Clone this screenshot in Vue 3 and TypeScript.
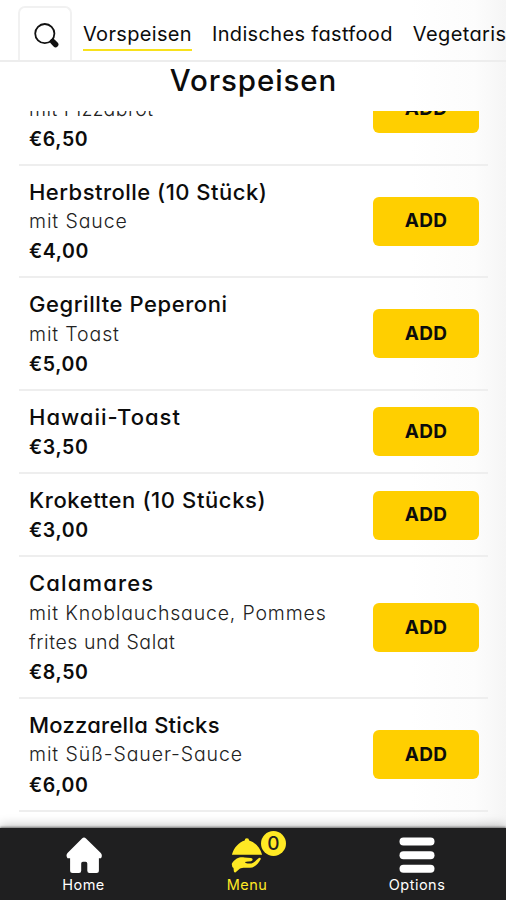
<script setup lang="ts">
interface Label {
  text: string
  tracking: number
}

interface Dish {
  name: Label
  note: Label[]
  price: string
}

const tabs: Label[] = [
  { text: 'Vorspeisen', tracking: 0.33 },
  { text: 'Indisches fastfood', tracking: 0.34 },
  { text: 'Vegetarisch', tracking: 0.4 },
]

const dishes: Dish[] = [
  { name: { text: 'Pizzataschen', tracking: 0.6 }, note: [{ text: 'mit Pizzabrot', tracking: 0.5 }], price: '€6,50' },
  { name: { text: 'Herbstrolle (10 Stück)', tracking: 0.48 }, note: [{ text: 'mit Sauce', tracking: 0.9 }], price: '€4,00' },
  { name: { text: 'Gegrillte Peperoni', tracking: 0.57 }, note: [{ text: 'mit Toast', tracking: 0.87 }], price: '€5,00' },
  { name: { text: 'Hawaii-Toast', tracking: 1 }, note: [], price: '€3,50' },
  { name: { text: 'Kroketten (10 Stücks)', tracking: 0.6 }, note: [], price: '€3,00' },
  {
    name: { text: 'Calamares', tracking: 1.15 },
    note: [
      { text: 'mit Knoblauchsauce, Pommes', tracking: 0.83 },
      { text: 'frites und Salat', tracking: 0.57 },
    ],
    price: '€8,50',
  },
  { name: { text: 'Mozzarella Sticks', tracking: 0.25 }, note: [{ text: 'mit Süß-Sauer-Sauce', tracking: 0.9 }], price: '€6,00' },
]

const spacing = (l: Label) => ({ letterSpacing: `${l.tracking}px` })
</script>

<template>
  <div class="screen">
    <header class="tabs">
      <div class="search">
        <svg viewBox="0 0 26 26" width="26" height="26">
          <circle cx="10.8" cy="10.6" r="9.6" fill="none" stroke="#111" stroke-width="1.8" />
          <path d="M16.6 16.8l1.8 1.8" stroke="#111" stroke-width="2.4" />
          <path d="M18.8 18.6l2.8 2.9" stroke="#111" stroke-width="5.6" stroke-linecap="round" />
        </svg>
      </div>
      <nav class="tab-list">
        <a v-for="(t, i) in tabs" :key="t.text" class="tab" :class="{ active: i === 0 }" :style="spacing(t)">{{ t.text }}</a>
      </nav>
    </header>
    <h1 class="heading">Vorspeisen</h1>
    <main class="list">
      <article v-for="d in dishes" :key="d.name.text" class="dish">
        <div class="info">
          <h2 class="name" :style="spacing(d.name)">{{ d.name.text }}</h2>
          <p v-for="n in d.note" :key="n.text" class="note" :style="spacing(n)">{{ n.text }}</p>
          <p class="price">{{ d.price }}</p>
        </div>
        <button class="add">ADD</button>
      </article>
    </main>
    <footer class="bar">
      <a class="item home">
        <svg viewBox="0 0 36 36" width="36" height="36">
          <path d="M18 .6Q19 .6 20 1.6L34.8 16Q36.8 18.5 35 21.2H32.9V33.5Q32.9 36 30.4 36H23.5Q21.3 36 21.3 33.8V26.4Q21.3 24.8 19.6 24.8H16.9Q15.2 24.8 15.2 26.4V33.8Q15.2 36 13 36H6.6Q4.1 36 4.1 33.5V21.2H1.5Q-.5 18.5 1.5 16L16 1.6Q17 .6 18 .6Z" fill="#fff" />
        </svg>
        <span class="cap">Home</span>
      </a>
      <a class="item menu">
        <svg viewBox="-1.5 0 36 36" width="36" height="36">
          <path d="M14.2 3.4a2.2 2.2 0 0 1 4.4 0C24.6 5.2 29.6 10.5 31.6 17.7H1.4C3.4 10.5 8.2 5.2 14.2 3.4Z" fill="#ffe924" />
          <path d="M1.4 26.4C5.5 20.6 10 19.6 14 20.6L20.5 20.9Q22.8 21.5 21.8 23.4Q21 24.5 17.5 24.4L14.5 25Q14.5 26.3 17 26.4H21C24 25.6 26 22.6 28.4 20.9Q30.7 20.3 30.2 22.3C28.5 25.6 25.2 29.6 21.8 30.4C17.5 31.4 12 30 9.2 31.7L5.2 35.3Q4 35.9 3.4 34.4L3 31Q1 29.5 1.4 26.4Z" fill="#ffe924" />
        </svg>
        <span class="badge">0</span>
        <span class="cap">Menu</span>
      </a>
      <a class="item options">
        <svg viewBox="0 0 36 36" width="36" height="36">
          <rect x=".5" y=".6" width="35" height="8" rx="4" fill="#fff" />
          <rect x=".5" y="14.2" width="35" height="8" rx="4" fill="#fff" />
          <rect x=".5" y="27.8" width="35" height="8" rx="4" fill="#fff" />
        </svg>
        <span class="cap">Options</span>
      </a>
    </footer>
  </div>
</template>

<style>
body { margin: 0; }
</style>
<style scoped>
.screen {
  width: 506px;
  height: 900px;
  overflow: hidden;
  display: flex;
  flex-direction: column;
  font-family: Inter, sans-serif;
  font-feature-settings: "cv11" 1;
  color: #0c0c0c;
  background: linear-gradient(to right, #fff 410px, #fcfcfc 475px, #f5f5f5 506px);
}
.tabs {
  box-sizing: border-box;
  flex: none;
  height: 62px;
  padding: 6px 0 0 18px;
  display: flex;
  border-bottom: 2px solid #ededed;
}
.search {
  box-sizing: border-box;
  flex: none;
  width: 54px;
  height: 54px;
  padding: 15px 0 0 14px;
  border: 2px solid #f1f1f1;
  border-bottom: none;
  border-radius: 7px 7px 0 0;
}
.search svg { display: block; }
.tab-list {
  display: flex;
  gap: 20px;
  align-items: flex-start;
  padding: 13px 0 0 11px;
}
.tab {
  font-size: 20px;
  line-height: 30px;
  white-space: nowrap;
}
.active { border-bottom: 2px solid #f8e11c; }
.heading {
  flex: none;
  height: 49px;
  box-sizing: border-box;
  padding: 0 0 0 1px;
  margin: 0;
  font-size: 29.5px;
  line-height: 36px;
  font-weight: 500;
  letter-spacing: 0.9px;
  text-align: center;
}
.list {
  flex: 1;
  min-height: 0;
  overflow: hidden;
  padding: 0 18px 0 19px;
}
.dish {
  display: flex;
  justify-content: space-between;
  align-items: center;
  padding: 10.8px 9px 9.8px 10px;
  border-bottom: 2px solid #eee;
}
.dish:first-child { margin-top: -57.8px; }
.name, .note, .price {
  margin: 0;
  line-height: 29.2px;
  white-space: nowrap;
}
.name { font-size: 22px; font-weight: 500; line-height: 30.5px; }
.note { font-size: 19.5px; font-weight: 300; color: #222; }
.price { font-size: 19.5px; font-weight: 600; letter-spacing: 0.6px; line-height: 30.2px; }
.add {
  width: 106px;
  height: 49px;
  padding: 0;
  border: none;
  border-radius: 6px;
  background: #ffcf00;
  color: #0c0c0c;
  font: 700 19px/48px Inter, sans-serif;
  letter-spacing: 0.3px;
}
.bar {
  flex: none;
  position: relative;
  height: 72px;
  background: #1f1f20;
  box-shadow: 0 -1px 2px #777, 0 -3px 10px rgba(0, 0, 0, 0.22);
  display: flex;
  color: #fff;
}
.item {
  flex: none;
  position: relative;
  display: flex;
  flex-direction: column;
  align-items: center;
  padding-top: 9px;
}
.item svg { display: block; }
.home { width: 167px; }
.menu { width: 160px; color: #ffe924; }
.options { width: 180px; }
.cap {
  font-size: 14.5px;
  line-height: 20px;
  margin-top: 2px;
  letter-spacing: 0.5px;
}
.badge {
  position: absolute;
  left: 94px;
  top: 3px;
  width: 25px;
  height: 25px;
  border-radius: 50%;
  background: #ffe924;
  color: #1f1f20;
  font-size: 19px;
  font-weight: 500;
  line-height: 26px;
  text-align: center;
}
</style>
